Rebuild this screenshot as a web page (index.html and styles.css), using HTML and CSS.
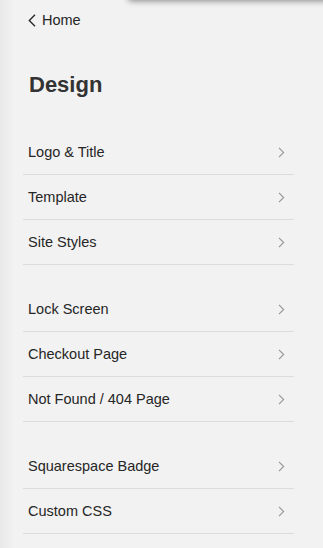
FILE: index.html
```html
<!DOCTYPE html>
<html>
<head>
<meta charset="utf-8">
<link rel="stylesheet" href="styles.css">
</head>
<body>
<div class="topshadow"></div>
<div class="panel">
  <a class="back" href="#">
    <svg class="back-icon" width="8" height="13" viewBox="0 0 8 13"><path d="M7 0.8L1.3 6.5L7 12.2" fill="none" stroke="#2a2a2a" stroke-width="1.4"/></svg>
    <span>Home</span>
  </a>
  <h1 class="title">Design</h1>
  <ul class="group">
    <li class="row"><span>Logo &amp; Title</span><svg class="chev" width="7" height="11" viewBox="0 0 7 11"><path d="M1 0.8L5.6 5.5L1 10.2" fill="none" stroke="#999" stroke-width="1.2"/></svg></li>
    <li class="row"><span>Template</span><svg class="chev" width="7" height="11" viewBox="0 0 7 11"><path d="M1 0.8L5.6 5.5L1 10.2" fill="none" stroke="#999" stroke-width="1.2"/></svg></li>
    <li class="row"><span>Site Styles</span><svg class="chev" width="7" height="11" viewBox="0 0 7 11"><path d="M1 0.8L5.6 5.5L1 10.2" fill="none" stroke="#999" stroke-width="1.2"/></svg></li>
  </ul>
  <ul class="group">
    <li class="row"><span>Lock Screen</span><svg class="chev" width="7" height="11" viewBox="0 0 7 11"><path d="M1 0.8L5.6 5.5L1 10.2" fill="none" stroke="#999" stroke-width="1.2"/></svg></li>
    <li class="row"><span>Checkout Page</span><svg class="chev" width="7" height="11" viewBox="0 0 7 11"><path d="M1 0.8L5.6 5.5L1 10.2" fill="none" stroke="#999" stroke-width="1.2"/></svg></li>
    <li class="row"><span>Not Found / 404 Page</span><svg class="chev" width="7" height="11" viewBox="0 0 7 11"><path d="M1 0.8L5.6 5.5L1 10.2" fill="none" stroke="#999" stroke-width="1.2"/></svg></li>
  </ul>
  <ul class="group">
    <li class="row"><span>Squarespace Badge</span><svg class="chev" width="7" height="11" viewBox="0 0 7 11"><path d="M1 0.8L5.6 5.5L1 10.2" fill="none" stroke="#999" stroke-width="1.2"/></svg></li>
    <li class="row"><span>Custom CSS</span><svg class="chev" width="7" height="11" viewBox="0 0 7 11"><path d="M1 0.8L5.6 5.5L1 10.2" fill="none" stroke="#999" stroke-width="1.2"/></svg></li>
  </ul>
</div>
</body>
</html>
```

FILE: styles.css
```css
html, body {
  margin: 0;
  padding: 0;
  height: 100%;
}
body {
  background: linear-gradient(to right, #e9e9e9 0px, #eeeeee 8px, #f2f2f2 15px, #f2f2f2 100%);
  font-family: "Liberation Sans", Arial, sans-serif;
  color: #262626;
  overflow: hidden;
}
.topshadow {
  position: fixed;
  top: -30px;
  left: 128px;
  right: -30px;
  height: 30px;
  background: #f2f2f2;
  border-radius: 4px;
  box-shadow: 0 1px 6px rgba(0, 0, 0, 0.45);
}
.panel {
  width: 271px;
  margin-left: 23px;
  padding-top: 10px;
}
.back {
  display: flex;
  align-items: center;
  gap: 6px;
  height: 20px;
  padding-left: 5px;
  color: #262626;
  text-decoration: none;
  font-size: 14.5px;
}
.back-icon {
  display: block;
}
.title {
  margin: 40px 0 0 0;
  padding-left: 6px;
  font-size: 22px;
  line-height: 29px;
  font-weight: bold;
  color: #333;
}
.group {
  list-style: none;
  margin: 0;
  padding: 0;
}
.title + .group {
  margin-top: 31px;
}
.group + .group {
  margin-top: 22px;
}
.row {
  display: flex;
  align-items: center;
  justify-content: space-between;
  height: 44px;
  border-bottom: 1px solid #dcdcdc;
  padding: 0 9px 0 5px;
  font-size: 14.5px;
}
.chev {
  display: block;
}
```
